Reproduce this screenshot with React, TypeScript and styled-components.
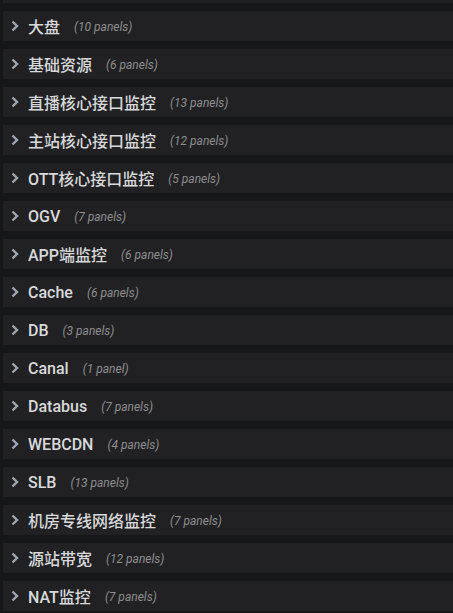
import React from 'react'
import styled, { createGlobalStyle } from 'styled-components'

const GlobalStyle = createGlobalStyle`
  html, body {
    margin: 0;
    padding: 0;
    background: #161719;
  }
  body {
    font-family: Roboto, "Noto Sans CJK SC", "Liberation Sans", sans-serif;
    overflow: hidden;
  }
`

const Page = styled.div`
  display: flex;
  flex-direction: column;
  gap: 8px;
  padding: 0 0 0 3px;
  margin-top: -27px;
  background: #161719;
  min-height: 100vh;
`

const Row = styled.div`
  display: flex;
  align-items: center;
  height: 30px;
  background: #212124;
  padding-left: 7px;
  cursor: pointer;
`

const Chevron = styled.span`
  display: flex;
  width: 10px;
  height: 14px;
  margin-right: 8px;
  color: #9fa7b3;
`

const Title = styled.span`
  font-size: 16px;
  font-weight: 500;
  color: #d8d9da;
  font-family: Roboto, "Noto Sans CJK SC", sans-serif;
`

const Count = styled.span`
  margin-left: 14px;
  margin-top: 2px;
  font-size: 12px;
  font-style: italic;
  color: #8e8e8e;
  font-family: Roboto, "Liberation Sans", sans-serif;
`

const rows: [string, number][] = [
  ['', 0],
  ['大盘', 10],
  ['基础资源', 6],
  ['直播核心接口监控', 13],
  ['主站核心接口监控', 12],
  ['OTT核心接口监控', 5],
  ['OGV', 7],
  ['APP端监控', 6],
  ['Cache', 6],
  ['DB', 3],
  ['Canal', 1],
  ['Databus', 7],
  ['WEBCDN', 4],
  ['SLB', 13],
  ['机房专线网络监控', 7],
  ['源站带宽', 12],
  ['NAT监控', 7],
]

const ChevronIcon = () => (
  <svg width="10" height="14" viewBox="0 0 10 14">
    <path d="M2.5 2.5 L7 7 L2.5 11.5" fill="none" stroke="currentColor" strokeWidth="2.4" />
  </svg>
)

export default function App() {
  return (
    <>
      <GlobalStyle />
      <Page>
        {rows.map(([title, n], i) => (
          <Row key={i}>
            {title && (
              <>
                <Chevron>
                  <ChevronIcon />
                </Chevron>
                <Title>{title}</Title>
                <Count>({n} {n === 1 ? 'panel' : 'panels'})</Count>
              </>
            )}
          </Row>
        ))}
      </Page>
    </>
  )
}
